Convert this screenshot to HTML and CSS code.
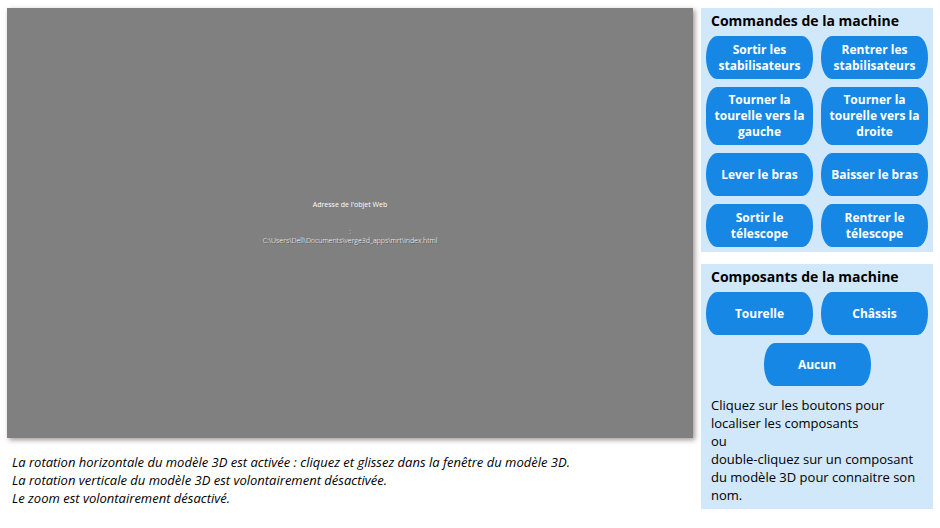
FILE: index.html
```html
<!DOCTYPE html>
<html lang="fr">
<head>
<meta charset="utf-8">
<title>Commandes de la machine</title>
<link rel="stylesheet" href="styles.css">
</head>
<body>
<div class="page">
  <main class="main">
    <section class="viewer">
      <p class="caption">Adresse de l'objet Web</p>
      <p class="address">:</p>
      <p class="address">C:\Users\Dell\Documents\verge3d_apps\mrt\index.html</p>
    </section>
    <div class="notes">
      <p>La rotation horizontale du modèle 3D est activée : cliquez et glissez dans la fenêtre du modèle 3D.</p>
      <p>La rotation verticale du modèle 3D est volontairement désactivée.</p>
      <p>Le zoom est volontairement désactivé.</p>
    </div>
  </main>
  <aside class="side">
    <section class="panel">
      <h2>Commandes de la machine</h2>
      <div class="buttons">
        <button type="button">Sortir les stabilisateurs</button>
        <button type="button">Rentrer les stabilisateurs</button>
        <button type="button">Tourner la tourelle vers la gauche</button>
        <button type="button">Tourner la tourelle vers la droite</button>
        <button type="button">Lever le bras</button>
        <button type="button">Baisser le bras</button>
        <button type="button">Sortir le<br>télescope</button>
        <button type="button">Rentrer le<br>télescope</button>
      </div>
    </section>
    <section class="panel">
      <h2>Composants de la machine</h2>
      <div class="buttons">
        <button type="button">Tourelle</button>
        <button type="button">Châssis</button>
        <button type="button" class="center">Aucun</button>
      </div>
      <div class="help">
        <p>Cliquez sur les boutons pour localiser les composants</p>
        <p>ou</p>
        <p>double-cliquez sur un composant du modèle 3D pour connaitre son nom.</p>
      </div>
    </section>
  </aside>
</div>
</body>
</html>
```
FILE: styles.css
```css
* { box-sizing: border-box; }
body {
  margin: 0;
  background: #fff;
  color: #000;
  font-family: "Open Sans", "Noto Sans", sans-serif;
  font-size: 13px;
  line-height: 18px;
}
p, h2 { margin: 0; }
.page {
  display: grid;
  grid-template-columns: 1fr 232px;
  gap: 8px;
  padding: 8px 7px 0;
}
.viewer {
  display: flex;
  flex-direction: column;
  align-items: center;
  justify-content: center;
  height: 430px;
  padding-bottom: 2px;
  background: #808080;
  color: #fff;
  font-size: 7px;
  line-height: 9px;
  box-shadow: 2px 2px 5px rgba(70, 50, 50, 0.5);
}
.caption { margin-bottom: 18px; }
.address {
  font-weight: 300;
  text-shadow: 1px 1px 0 rgba(0, 0, 0, 0.35);
}
.notes {
  padding: 15px 5px 0;
  font-style: italic;
}
.side {
  display: flex;
  flex-direction: column;
  gap: 12px;
}
.panel {
  padding: 3px 5px 5px;
  background: #d1e7fa;
}
h2 {
  padding: 0 5px;
  margin-bottom: 6px;
  font-size: 14px;
  line-height: 19px;
}
.buttons {
  display: grid;
  grid-template-columns: 1fr 1fr;
  gap: 8px;
}
button {
  min-height: 43px;
  padding: 5px 6px;
  border: 0;
  border-radius: 11px / 22px;
  background: #1787e6;
  color: #fff;
  font: bold 12px/16px "Open Sans", "Noto Sans", sans-serif;
}
.center {
  grid-column: 1 / -1;
  justify-self: center;
  width: 107px;
}
.help {
  padding: 10px 5px 0;
}
```
